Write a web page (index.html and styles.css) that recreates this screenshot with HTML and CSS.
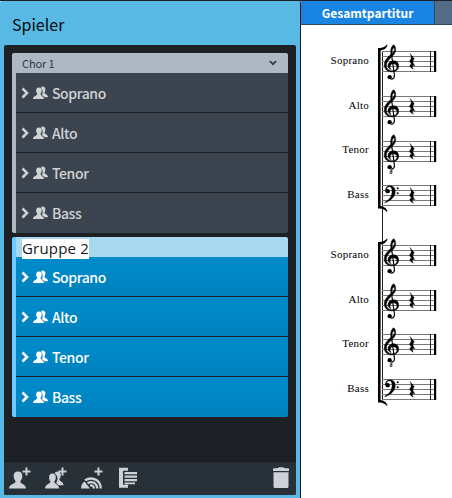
FILE: index.html
```html
<!DOCTYPE html>
<html lang="de">
<head>
<meta charset="utf-8">
<title>Spieler</title>
<link rel="stylesheet" href="styles.css">
</head>
<body>
<svg class="defs" aria-hidden="true">
  <defs>
    <symbol id="chev" viewBox="0 0 8 12"><path d="M1.500 1.500 6 6 1.500 10.500" fill="none" stroke="currentColor" stroke-width="2.500"/></symbol>
    <symbol id="people" viewBox="0 0 16 14">
      <path d="M9.500.5c2.100 0 3.100 1.400 2.800 3.500-.1 1.500-.5 2.200-.9 2.800 0 1.300 3.300 1.700 3.500 3.700v.7h-3.500c-.6-1.100-1.600-1.400-2.600-1.900C10 7.200 10.300 4 8 2 8.200 1.100 8.700.5 9.500.5Z"/>
      <path d="M6 1.500c2 0 2.900 1.300 2.700 3.300-.1 1.400-.6 2.200-1.100 2.900-.3 2 3 2 3.400 5.300H0c.2-3.300 4.300-3.300 4.300-5.300-.6-.7-1.100-1.500-1.200-2.900C3 2.800 4 1.500 6 1.500Z"/>
    </symbol>
    <g id="staff">
      <path class="line" d="M12 .5h54M12 5.500h54M12 10.500h54M12 15.500h54M12 20.500h54"/>
      <path class="bar" d="M60.500 0v21"/>
      <path d="M64 0h2.200v21H64z"/>
      <path transform="translate(12 .5) scale(.3333)" d="M84 6 97 22C91 29 92 34 99 43 91 40 88 44 94 53 83 48 80 38 89 38L82 29C89 22 89 16 84 6Z" stroke="#000"/>
    </g>
    <g id="treble" transform="translate(12 .5) scale(.3333)">
      <path fill-rule="evenodd" stroke="#000" stroke-width="1.500" d="M35-20C30-18 24-6 27 8 16 18 7 27 7 40 7 54 17 61 29 61 41 61 50 55 50 43 50 34 43 28 35 28 25 28 18 35 18 43 18 48 22 53 27 54 24 50 23 47 25 43 26 39 29 37 34 37 41 37 45 41 45 47 45 54 38 58 30 58 20 58 13 51 13 42 13 31 20 24 30 15 37 9 41 3 41-5 41-12 39-18 35-20ZM37-11C40-6 35 2 30 6 29-2 32-9 37-11Z"/>
      <path d="M28 5 37 69C39 79 33 84 26 83" fill="none" stroke="#000" stroke-width="3.500"/>
      <circle cx="23" cy="77" r="6.500"/>
    </g>
    <g id="bass" transform="translate(12 .5) scale(.3333)">
      <path stroke="#000" d="M10 17C10 6 16 1 24 1 34 1 40 8 40 18 40 34 27 45 9 52L8 50C22 43 30 32 30 18 30 9 28 4 22 4 17 4 13 8 13 14Z"/>
      <circle cx="17" cy="17" r="6.500"/><circle cx="47" cy="8" r="3"/><circle cx="47" cy="23" r="3"/>
    </g>
    <g id="bracket">
      <path d="M8 1h2.600v159H8z"/>
      <path d="M8 0C12 .5 15-1 17-3.500L17.500-2.500C16 .5 14 2.500 8 2.500ZM8 160.500C12 160 15 161.500 17 164L17.500 163C16 160 14 158 8 158Z"/>
    </g>
  </defs>
</svg>
<div class="app">
  <aside class="panel">
    <h1>Spieler</h1>
    <div class="body">
      <section class="group">
        <header><span>Chor 1</span><svg class="down" viewBox="0 0 8 6"><path d="M.8 1 4 4.200 7.200 1" fill="none" stroke="currentColor" stroke-width="1.700"/></svg></header>
        <ul>
          <li><svg class="chev"><use href="#chev"/></svg><svg class="people"><use href="#people"/></svg><span>Soprano</span></li>
          <li><svg class="chev"><use href="#chev"/></svg><svg class="people"><use href="#people"/></svg><span>Alto</span></li>
          <li><svg class="chev"><use href="#chev"/></svg><svg class="people"><use href="#people"/></svg><span>Tenor</span></li>
          <li><svg class="chev"><use href="#chev"/></svg><svg class="people"><use href="#people"/></svg><span>Bass</span></li>
        </ul>
      </section>
      <section class="group selected">
        <header><span class="edit">Gruppe 2</span></header>
        <ul>
          <li><svg class="chev"><use href="#chev"/></svg><svg class="people"><use href="#people"/></svg><span>Soprano</span></li>
          <li><svg class="chev"><use href="#chev"/></svg><svg class="people"><use href="#people"/></svg><span>Alto</span></li>
          <li><svg class="chev"><use href="#chev"/></svg><svg class="people"><use href="#people"/></svg><span>Tenor</span></li>
          <li><svg class="chev"><use href="#chev"/></svg><svg class="people"><use href="#people"/></svg><span>Bass</span></li>
        </ul>
      </section>
      <footer>
        <svg class="tool" viewBox="0 0 24 24"><path d="M10 4.500c3 0 4.500 1.800 4.300 5-.1 2.200-1 3.300-1.900 4.500-.5 3.500 5 2.200 5.600 7.500H1c.6-5.300 7-4 6.500-7.500-.9-1.200-1.700-2.300-1.800-4.500-.2-3.200 1.300-5 4.300-5Z"/><path class="plus" d="M18.500.5v8M14.500 4.500h8"/></svg>
        <svg class="tool" viewBox="0 0 24 24"><path d="M13.500 4.500c2.500 0 3.700 1.800 3.200 4.500-.2 1.500-.8 2.400-1.400 3.200 0 2 4 2.500 4.200 6h-5c-.7-1-1.500-1.800-2.400-2.300 2-3 2-7.500-1.400-9.500.6-1.200 1.500-1.900 2.800-1.900Z"/><path d="M8.500 6.500c2.400 0 3.500 1.600 3.300 4.200-.1 1.800-.8 2.900-1.500 3.800-.2 2.700 4.400 2 4.900 7H1c.5-5 5.500-4.300 5.400-7-.7-.9-1.200-2-1.300-3.800-.2-2.600 1-4.200 3.400-4.200Z"/><path class="plus" d="M18.500.5v8M14.500 4.500h8"/></svg>
        <svg class="tool" viewBox="0 0 24 24"><path d="M1 21.500c0-3.500 1.300-5.500 3.500-7L10 21.500Z"/><path d="M5 13.300C11 9.500 20.500 12 20.800 21.500M7.500 16.300C12 13.500 17 16 17.300 21.500M10 18.800c2-1 3.700.2 4 2.700" fill="none" stroke="currentColor" stroke-width="2.300"/><path class="plus" d="M18.500.5v8M14.500 4.500h8"/></svg>
        <svg class="tool" viewBox="0 0 24 24"><path d="M3 .7h9v3H7v14h5v3H3zM8.500 5H21v2.300H8.500zM8.500 8.500H21v2.300H8.500zM8.500 12H21v2.300H8.500zM8.500 15.500H19v1.800H8.500z"/></svg>
        <svg class="tool trash" viewBox="0 0 24 24"><path d="M4 1.500 9 1 10 .3h4l1 .7 5 .5V4H4zM4.500 5.300h15V19.500q0 1.500-1.500 1.500H6Q4.500 21 4.500 19.500z"/></svg>
      </footer>
    </div>
  </aside>
  <main>
    <nav><span class="tab active">Gesamtpartitur</span><span class="tab"></span></nav>
    <div class="score">
      <div class="labels">
        <div class="system"><span>Soprano</span><span>Alto</span><span>Tenor</span><span>Bass</span></div>
        <div class="system"><span>Soprano</span><span>Alto</span><span>Tenor</span><span>Bass</span></div>
      </div>
      <svg class="music" viewBox="370 25 82 400">
        <path class="bar" d="M382.500 51v349"/>
        <g transform="translate(370 48)"><use href="#bracket"/></g>
        <g transform="translate(370 242)"><use href="#bracket"/></g>
        <g transform="translate(370 51)"><use href="#staff"/><use href="#treble"/></g>
        <g transform="translate(370 96)"><use href="#staff"/><use href="#treble"/></g>
        <g transform="translate(370 141)"><use href="#staff"/><use href="#treble"/><text x="19.500" y="32.500">8</text></g>
        <g transform="translate(370 185)"><use href="#staff"/><use href="#bass"/></g>
        <g transform="translate(370 245)"><use href="#staff"/><use href="#treble"/></g>
        <g transform="translate(370 290)"><use href="#staff"/><use href="#treble"/></g>
        <g transform="translate(370 334)"><use href="#staff"/><use href="#treble"/><text x="19.500" y="32.500">8</text></g>
        <g transform="translate(370 379)"><use href="#staff"/><use href="#bass"/></g>
      </svg>
    </div>
  </main>
</div>
</body>
</html>
```
FILE: styles.css
```css
* { box-sizing: border-box; }
body { margin: 0; background: #fff; font-family: "Noto Sans CJK SC", sans-serif; overflow: hidden; }
.defs { display: block; width: 0; height: 0; }
.app { display: flex; width: 452px; height: 498px; border-top: 1px solid #1b2028; }
.panel { width: 301px; flex: none; padding: 0 4px 3px; display: flex; flex-direction: column; background: #58bae4; border-right: 1px solid #15181c; border-radius: 2px 2px 0 0; }
h1 { margin: 0; height: 44px; padding: 2px 0 0 8px; font-size: 16px; line-height: 42px; font-weight: 400; color: #070b10; }
.body { flex: 1; display: flex; flex-direction: column; padding-top: 8px; background: #1d2024; border-radius: 2px; }
.group { margin: 0 8px 4px; border-left: 4px solid #adb8c4; border-radius: 2px; overflow: hidden; }
.group header { height: 20px; padding: 0 11px 0 6px; display: flex; align-items: center; justify-content: space-between; background: #adb8c4; color: #2e3841; font-size: 11px; line-height: 20px; letter-spacing: -.1px; }
.down { width: 8px; height: 6px; }
ul { list-style: none; margin: 0; padding: 0; }
li { height: 40px; display: flex; align-items: center; padding-left: 5px; background: #3c454f; border-bottom: 1px solid #1d2024; color: #d0d2d5; font-size: 14px; line-height: 38px; font-weight: 500; letter-spacing: -.4px; }
li:last-child { border-bottom: 0; }
.chev { width: 8px; height: 12px; margin-right: 4px; }
.people { width: 16px; height: 14px; margin-right: 3px; fill: currentColor; }
.selected { border-left-color: #69ceff; }
.selected header { background: #a7d8ee; }
.selected li { background: linear-gradient(#008bcc, #0081bd); color: #fff; }
.edit { height: 20px; margin-top: 4px; background: #fff; color: #15191d; font: 15px/19px "Open Sans", sans-serif; letter-spacing: .2px; }
footer { height: 34px; margin-top: auto; display: flex; align-items: flex-start; padding: 5px 3px 0 4px; gap: 12px; background: #293138; border-top: 1px solid #15191d; border-radius: 0 0 2px 2px; }
.tool { width: 24px; height: 24px; fill: currentColor; color: #ced1d6; }
.plus { fill: none; stroke: currentColor; stroke-width: 2; }
.trash { margin-left: auto; }
main { flex: 1; min-width: 0; background: #fff; }
nav { display: flex; height: 24px; }
.tab { flex: 1; background: #536d87; border-bottom: 1px solid #30485f; }
.tab.active { flex: none; width: 134px; text-align: center; background: #1a84e3; color: #fff; font-size: 12px; line-height: 24px; font-weight: 700; border-right: 1px solid #30485f; }
.score { display: flex; }
.labels { width: 69px; padding-top: 13px; }
.system { display: grid; grid-template-rows: repeat(4, 44.6px); margin-bottom: 15.4px; }
.system span { display: flex; align-items: center; justify-content: flex-end; padding-right: 1px; font: 11px "Liberation Serif", serif; letter-spacing: .25px; color: #000; }
.music { width: 82px; height: 400px; flex: none; }
.line { fill: none; stroke: #777; stroke-width: 1; }
.bar { fill: none; stroke: #222; stroke-width: 1; }
.music text { font: italic bold 6px "Liberation Serif", serif; }
```
